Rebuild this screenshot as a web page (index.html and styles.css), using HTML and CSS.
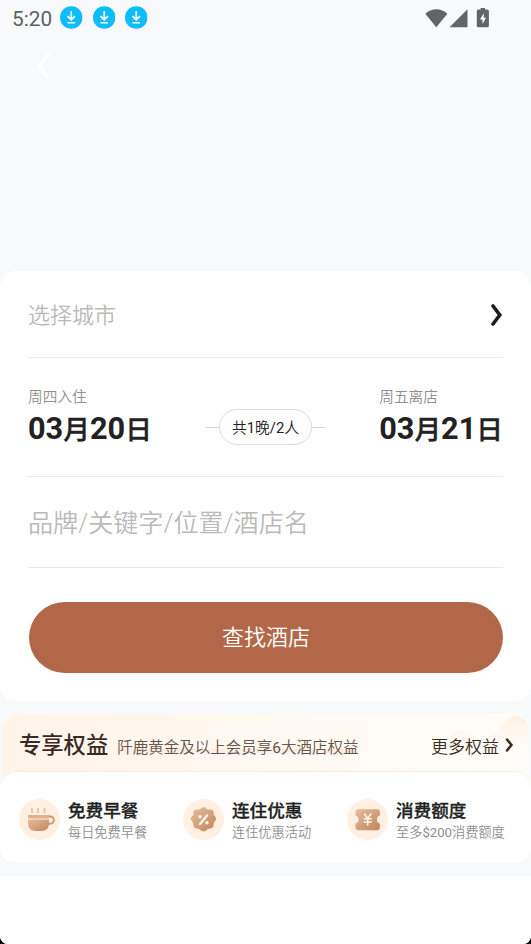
FILE: index.html
```html
<!DOCTYPE html>
<html lang="zh-CN">
<head>
<meta charset="utf-8">
<meta name="viewport" content="width=device-width, initial-scale=1">
<title>酒店预订</title>
<link rel="stylesheet" href="styles.css">
</head>
<body>
<div class="screen">
  <svg class="defs" width="0" height="0" aria-hidden="true">
    <defs>
      <linearGradient id="bronze" x1="0" y1="0" x2="1" y2="1">
        <stop offset="0" stop-color="#e5bd9b"/><stop offset="1" stop-color="#c1865c"/>
      </linearGradient>
      <symbol id="download" viewBox="0 0 24 24">
        <circle cx="12" cy="12" r="12" fill="#0dbcfb"/>
        <path d="M12 5v9M8 10.500l4 4 4-4M8 17.600h8" fill="none" stroke="#fff" stroke-width="1.800"/>
      </symbol>
    </defs>
  </svg>

  <header class="status">
    <div class="status-left">
      <span class="time">5:20</span>
      <svg class="dl"><use href="#download"/></svg>
      <svg class="dl"><use href="#download"/></svg>
      <svg class="dl"><use href="#download"/></svg>
    </div>
    <svg class="signals" width="68" height="22" viewBox="0 0 68 22">
      <path d="M.3 5.800C6.500 -.2 16.200 -.2 22.400 5.800L11.300 19.300z" fill="#636465"/>
      <path d="M42.500 1.200V19.300H24.500z" fill="#636465"/>
      <path d="M55.600 0h4.400v1.500h2.300q1.600 0 1.600 1.600v14.600q0 1.600-1.600 1.600h-8.900q-1.600 0-1.600-1.600V3.100q0-1.600 1.600-1.600h2.200z" fill="#636465"/>
      <path d="M58.700 5.200v4.500h2.400L57.500 16v-4.600h-2.400z" fill="#fff"/>
    </svg>
  </header>

  <nav class="hero">
    <svg class="back" width="14" height="26" viewBox="0 0 14 26"><path d="M12.500 1 3 13l9 12" fill="none" stroke="#fff" stroke-width="3"/></svg>
  </nav>

  <main>
    <section class="search">
      <div class="row city">
        <span>选择城市</span>
        <svg width="14" height="22" viewBox="0 0 14 22"><path d="M4 2l6.800 9L4 20" fill="none" stroke="#1d1d1f" stroke-width="3.600" stroke-linecap="round"/></svg>
      </div>
      <div class="row dates">
        <div class="date">
          <div class="day">周四入住</div>
          <div class="num">03<b>月</b>20<b>日</b></div>
        </div>
        <div class="stay"><span class="pill">共<i>1</i>晚<i>/2</i>人</span></div>
        <div class="date">
          <div class="day">周五离店</div>
          <div class="num">03<b>月</b>21<b>日</b></div>
        </div>
      </div>
      <div class="row keyword">品牌/关键字/位置/酒店名</div>
      <button class="submit">查找酒店</button>
    </section>

    <section class="benefits">
      <div class="benefits-head">
        <svg class="deco" width="80" height="58" viewBox="0 0 80 58">
          <defs><linearGradient id="peach" x1="0" y1="0" x2="0" y2="1"><stop offset="0" stop-color="#fff0e2"/><stop offset=".8" stop-color="#fffaf5" stop-opacity="0"/></linearGradient></defs>
          <path d="M4 21Q5 14 12 17L35 29Q44 24 56 8Q64 -1 69 2Q80 4 80 20V58H4z" fill="url(#peach)"/>
        </svg>
        <h2>专享权益</h2>
        <p><span>阡鹿黄金及以上会员享<i>6</i>大酒店权益</span></p>
        <a class="more">更多权益
          <svg width="9" height="14" viewBox="0 0 9 14"><path d="M2 1.500 6.500 7 2 12.500" fill="none" stroke="#3b2a24" stroke-width="2.500" stroke-linecap="round"/></svg>
        </a>
      </div>
      <div class="cards">
        <div class="item">
          <svg class="icon" viewBox="0 0 41 41">
            <circle cx="20.500" cy="20.500" r="20.500" fill="#fff0e2"/>
            <path d="M13 9v5M19 9v5M25.500 9v5" stroke="#e6c3a5" stroke-width="1.800"/>
            <path d="M29 17.500h2.200a3.600 3.600 0 0 1 0 7.200H28" fill="none" stroke="#cf9a73" stroke-width="2"/>
            <rect x="9" y="16" width="21" height="3.500" rx="1" fill="#dfb18d"/>
            <path d="M9 20.500h21v3.500q0 8-8 8H17q-8 0-8-8z" fill="url(#bronze)"/>
          </svg>
          <div><h3>免费早餐</h3><p>每日免费早餐</p></div>
        </div>
        <div class="item">
          <svg class="icon" viewBox="0 0 41 41">
            <circle cx="20.500" cy="20.500" r="20.500" fill="#fff0e2"/>
            <g fill="url(#bronze)">
              <path d="M20.500 8.200Q22.500 8.200 24.200 10.600Q30 10.100 30.500 12.300L30.700 15.700Q34.200 19.200 32.800 20.900L30.600 24.200Q30.900 28.800 28.300 29.300L24.900 29.900Q22.500 32.400 20.500 32.400T16.100 29.900L12.700 29.300Q10.100 28.800 10.400 24.200L8.200 20.900Q6.800 19.200 10.300 15.700L10.500 12.300Q11 10.100 16.800 10.600Q18.500 8.200 20.500 8.200z"/>
            </g>
            <path d="m16.800 25.200 7.400-9" stroke="#fff5ec" stroke-width="2.200" stroke-linecap="round"/>
            <circle cx="17" cy="17.800" r="1.700" fill="#fff5ec"/><circle cx="24" cy="23.800" r="1.700" fill="#fff5ec"/>
          </svg>
          <div><h3>连住优惠</h3><p>连住优惠活动</p></div>
        </div>
        <div class="item">
          <svg class="icon" viewBox="0 0 41 41">
            <circle cx="20.500" cy="20.500" r="20.500" fill="#fff0e2"/>
            <path d="M11.500 10.200h18.400q3 0 3 3v3.200q-3 .9-3 4.100t3 4.100v3.700q0 3-3 3H11.500q-3 0-3-3v-3.700q3-.9 3-4.100t-3-4.100v-3.200q0-3 3-3z" fill="url(#bronze)"/>
            <path d="m17.200 14.500 3.500 5 3.500-5M20.700 19.500v7M16.700 19.700h8M16.700 23h8" fill="none" stroke="#fff5ec" stroke-width="1.600"/>
          </svg>
          <div><h3>消费额度</h3><p>至多<i>$200</i>消费额度</p></div>
        </div>
      </div>
    </section>
  </main>
  <footer class="bottom"></footer>
</div>
</body>
</html>
```
FILE: styles.css
```css
* { box-sizing: border-box; margin: 0; padding: 0; }
body {
  background: #000;
  font-family: Roboto, "Noto Sans CJK SC", sans-serif;
  color: #222;
}
i { font-style: normal; font-weight: 400; }
.screen {
  height: 944px;
  display: flex;
  flex-direction: column;
  background: #f8f9fb;
  border-radius: 0 0 8px 8px;
  overflow: hidden;
}
.defs { display: block; height: 0; flex: none; }

.status {
  height: 36px;
  display: flex;
  align-items: center;
  justify-content: space-between;
  padding: 0 38px 0 12px;
  flex: none;
}
.status-left { display: flex; align-items: center; gap: 10px; }
.time { font-size: 20.800px; line-height: 36px; color: #5f6062; margin-right: -2px; padding-top: 1px; }
.dl { width: 22.500px; height: 23px; margin-top: -1px; }
.signals { margin-top: 2px; }

.hero { height: 235px; padding: 17px 0 0 36px; flex: none; }
.back { display: block; }

.search {
  height: 430px;
  background: #fff;
  border-radius: 16px;
  padding: 0 28px;
}
.row { display: flex; align-items: center; border-bottom: 1px solid #e9e9e9; }
.city { height: 87px; justify-content: space-between; font-size: 22px; color: #bababa; font-weight: 350; }
.city span { margin-top: -2px; }
.city svg { margin-top: 1px; }
.dates { height: 119px; justify-content: space-between; align-items: flex-start; padding-top: 29px; }
.day { font-size: 14.700px; line-height: 20px; color: #8f8f8f; font-weight: 350; }
.num { display: flex; align-items: baseline; font-size: 30.700px; line-height: 40px; font-weight: 700; color: #222; margin-top: 2px; white-space: nowrap; }
.num b { font-size: 26.700px; font-weight: 500; -webkit-text-stroke: .4px #222; }
.stay { display: flex; align-items: center; margin-top: 22px; }
.stay::before, .stay::after { content: ""; width: 13px; height: 1px; background: #d8d8d8; }
.pill {
  width: 93px;
  height: 36px;
  border: 1px solid #dcdcdc;
  border-radius: 18px;
  font-size: 14.800px;
  line-height: 35px;
  padding-top: 1px;
  text-align: center;
  font-weight: 350;
}
.keyword { height: 91px; font-size: 25.100px; color: #bababa; font-weight: 350; padding-bottom: 2px; }
.submit {
  display: block;
  width: 474px;
  height: 71px;
  margin: 34px 0 0 1px;
  border: 0;
  border-radius: 36px;
  background: #b26848;
  color: #fff;
  font: 350 22px/71px Roboto, "Noto Sans CJK SC", sans-serif;
}

.benefits {
  height: 149px;
  margin-top: 13px;
}
.benefits-head {
  position: relative;
  height: 74px;
  margin: 0 2px;
  padding: 0 15px 16px 17px;
  display: flex;
  align-items: center;
  background: linear-gradient(100deg, #fff4e8, #fff9f2 50%, #fffdf9);
  border-radius: 16px 16px 0 0;
}
.deco { position: absolute; right: 0; top: 0; }
.benefits h2 { position: relative; font-size: 22.300px; font-weight: 500; color: #3b2a24; white-space: nowrap; }
.benefits-head p { margin: 5px 0 0 9px; font-size: 15.500px; font-weight: 350; color: #67544b; white-space: nowrap; }
.benefits-head p span { background: linear-gradient(transparent 55%, #ffeadb 55%, #fff2e8 82%, transparent 82%); }
.more { position: relative; margin-left: auto; display: flex; align-items: center; gap: 6px; font-size: 17px; font-weight: 350; color: #3b2a24; margin-top: 4px; }
.cards {
  position: relative;
  height: 91px;
  margin-top: -16px;
  padding: 0 0 0 19px;
  display: flex;
  background: #fff;
  border-radius: 16px;
  box-shadow: 0 -1px 1px #fbeede;
}
.item { width: 164px; flex: none; display: flex; gap: 8px; padding-top: 27px; white-space: nowrap; }
.icon { width: 41px; height: 41px; flex: none; }
h3 { font-size: 17.600px; line-height: 24px; font-weight: 500; -webkit-text-stroke: .3px #222; color: #222; }
.item p { font-size: 13.200px; line-height: 20px; font-weight: 350; color: #8f8f8f; }
.bottom { flex: 1; margin-top: 13px; background: #fff; }
```
